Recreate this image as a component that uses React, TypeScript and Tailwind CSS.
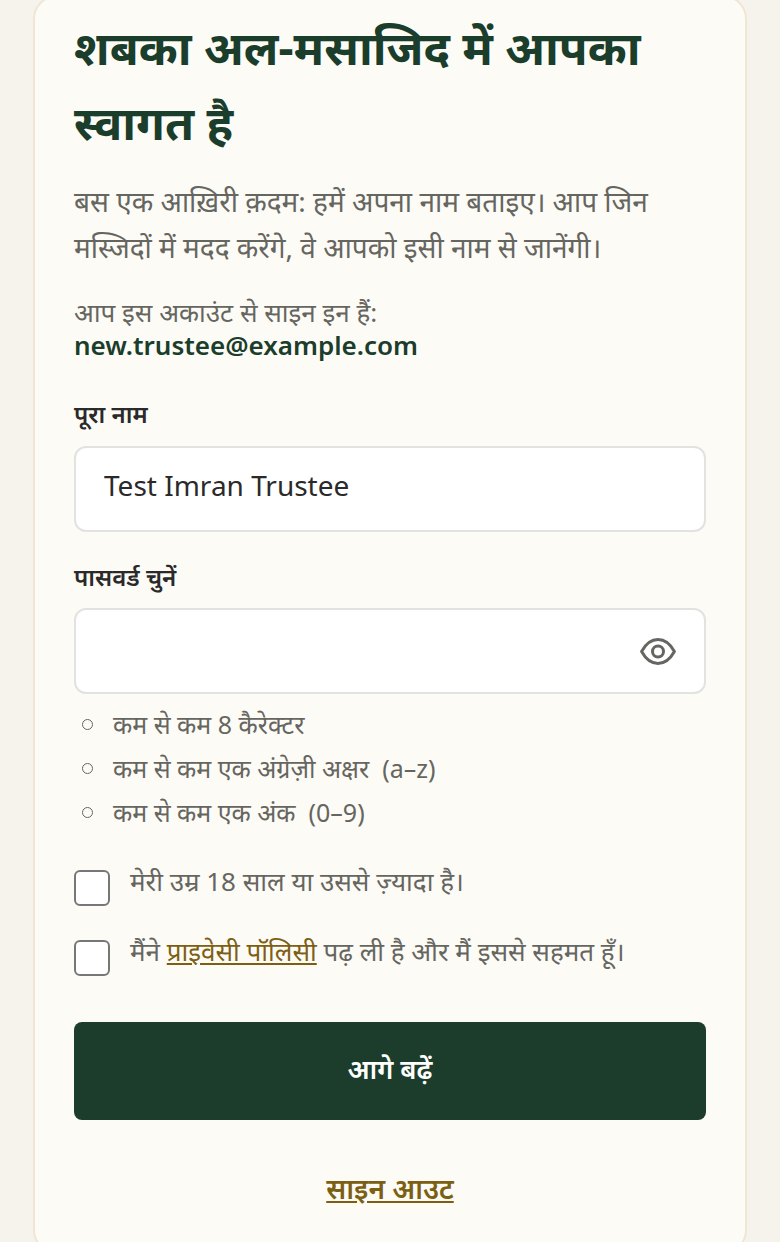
const rules = [
  "कम से कम 8 कैरेक्टर",
  "कम से कम एक अंग्रेज़ी अक्षर  (a–z)",
  "कम से कम एक अंक  (0–9)",
];

export default function App() {
  return (
    <div className="h-[1242px] overflow-hidden bg-[#f6f3ed] px-[33px] font-['Noto_Sans',sans-serif]">
      <div className="-mt-[5px] h-[1259px] rounded-[24px] border-2 border-[#efe6d6] bg-[#fdfbf6] px-[39px] pt-[13px]">
        <h1 className="text-[47px] leading-[75px] font-bold text-[#1b3d2b]">
          शबका अल-मसाजिद में आपका स्वागत है
        </h1>
        <p className="mt-[18px] text-[28px] leading-[46px] text-[#666661]">
          बस एक आख़िरी क़दम: हमें अपना नाम बताइए। आप जिन मस्जिदों में मदद करेंगे, वे आपको इसी नाम से जानेंगी।
        </p>
        <p className="mt-[26px] text-[26px] leading-[33px] text-[#666661]">
          आप इस अकाउंट से साइन इन हैं:
          <br />
          <span className="font-semibold text-[#1b3d2b]">new.trustee@example.com</span>
        </p>

        <label className="mt-[35px] block text-[24px] leading-[34px] font-semibold text-[#2a2a2a]">पूरा नाम</label>
        <input
          readOnly
          value="Test Imran Trustee"
          className="mt-[15px] h-[86px] w-full rounded-[12px] border-2 border-[#e2e2e0] bg-white px-[28px] pb-[8px] text-[28px] text-[#2a2a2a] outline-none"
        />

        <label className="mt-[28px] block text-[24px] leading-[34px] font-semibold text-[#2a2a2a]">पासवर्ड चुनें</label>
        <div className="relative mt-[14px]">
          <input
            readOnly
            type="password"
            className="h-[86px] w-full rounded-[12px] border-2 border-[#e2e2e0] bg-white px-[28px] outline-none"
          />
          <svg
            viewBox="0 0 36 27"
            fill="none"
            stroke="#666661"
            strokeWidth={3}
            className="absolute top-[30px] right-[30px] h-[27px] w-[36px]"
          >
            <path d="M1.6 13.5C6 5.5 12 1.6 18 1.6S30 5.5 34.4 13.5C30 21.5 24 25.4 18 25.4S6 21.5 1.6 13.5Z" strokeLinejoin="round" />
            <circle cx="18" cy="13.5" r="5.5" />
          </svg>
        </div>

        <ul className="mt-[12px] flex flex-col gap-[8px]">
          {rules.map((r) => (
            <li key={r} className="flex items-center text-[25px] leading-[36px] whitespace-pre text-[#666661]">
              <span className="ml-[8px] h-[11px] w-[11px] rounded-full border-[1.5px] border-[#666661]" />
              <span className="ml-[20px]">{r}</span>
            </li>
          ))}
        </ul>

        <div className="mt-[40px] flex flex-col gap-[34px]">
          <div className="flex gap-[20px]">
            <span className="h-[36px] w-[36px] shrink-0 rounded-[6px] border-2 border-[#777] bg-white" />
            <span className="text-[26px] leading-[22px] text-[#666661]">मेरी उम्र 18 साल या उससे ज़्यादा है।</span>
          </div>
          <div className="flex gap-[20px]">
            <span className="h-[36px] w-[36px] shrink-0 rounded-[6px] border-2 border-[#777] bg-white" />
            <span className="text-[26px] leading-[22px] text-[#666661]">
              मैंने <a className="text-[#7d5f14] underline">प्राइवेसी पॉलिसी</a> पढ़ ली है और मैं इससे सहमत हूँ।
            </span>
          </div>
        </div>

        <button className="mt-[46px] h-[98px] w-full rounded-[8px] bg-[#1c3d2b] pb-[4px] text-[27px] font-semibold text-white">
          आगे बढ़ें
        </button>
        <div className="mt-[47px] text-center">
          <a className="text-[28px] font-semibold text-[#7d5f14] underline">साइन आउट</a>
        </div>
      </div>
    </div>
  );
}
